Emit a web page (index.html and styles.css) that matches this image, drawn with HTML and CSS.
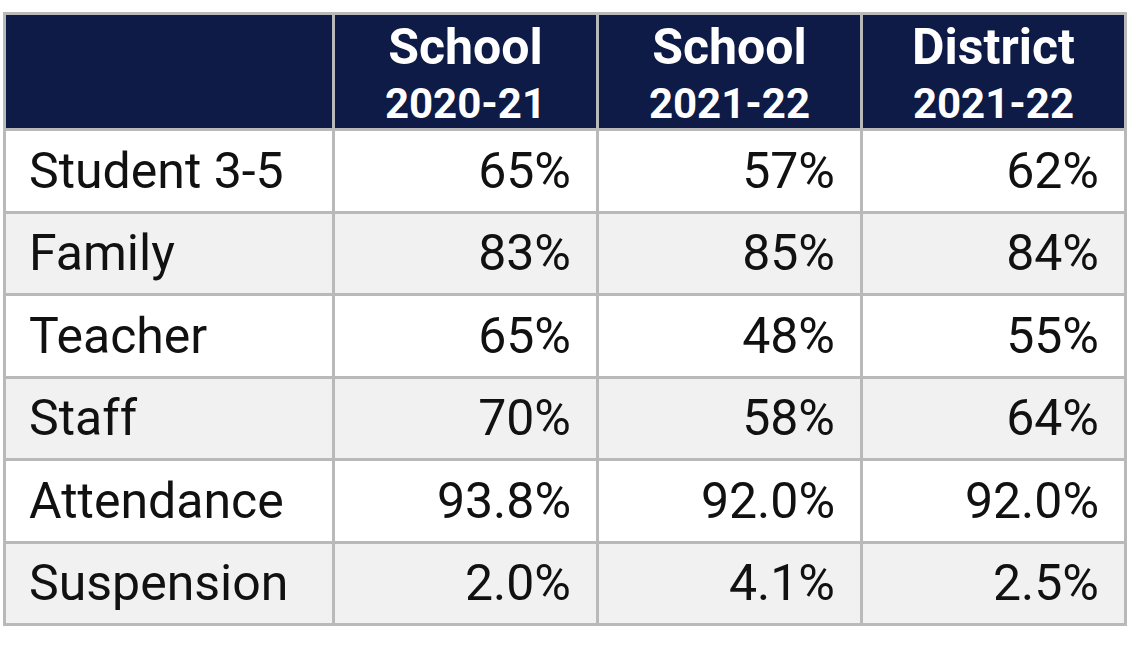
FILE: index.html
```html
<!DOCTYPE html>
<html>
<head>
<meta charset="utf-8">
<link rel="stylesheet" href="styles.css">
</head>
<body>
<table class="stats">
  <colgroup>
    <col class="c-label">
    <col class="c-val">
    <col class="c-val">
    <col class="c-val">
  </colgroup>
  <thead>
    <tr class="head">
      <th></th>
      <th><span class="h-top">School</span><span class="h-year">2020-21</span></th>
      <th><span class="h-top">School</span><span class="h-year">2021-22</span></th>
      <th><span class="h-top">District</span><span class="h-year">2021-22</span></th>
    </tr>
  </thead>
  <tbody>
    <tr><td class="label">Student 3-5</td><td>65%</td><td>57%</td><td>62%</td></tr>
    <tr class="alt"><td class="label">Family</td><td>83%</td><td>85%</td><td>84%</td></tr>
    <tr><td class="label">Teacher</td><td>65%</td><td>48%</td><td>55%</td></tr>
    <tr class="alt"><td class="label">Staff</td><td>70%</td><td>58%</td><td>64%</td></tr>
    <tr><td class="label">Attendance</td><td>93.8%</td><td>92.0%</td><td>92.0%</td></tr>
    <tr class="alt"><td class="label">Suspension</td><td>2.0%</td><td>4.1%</td><td>2.5%</td></tr>
  </tbody>
</table>
</body>
</html>
```
FILE: styles.css
```css
html, body {
  margin: 0;
  padding: 0;
  background: #ffffff;
}
body {
  padding: 12px 0 0 3px;
  font-family: Roboto, "Liberation Sans", sans-serif;
}
.stats {
  border-collapse: collapse;
  width: 1123px;
  table-layout: fixed;
  border: 3px solid #b9b9b9;
}
.c-label { width: 329px; }
.c-val { width: 264px; }
.stats th, .stats td {
  border: 3px solid #b9b9b9;
  padding: 0;
}
.head th {
  background: #0e1b47;
  color: #ffffff;
  height: 113px;
  text-align: center;
  vertical-align: top;
  font-weight: 700;
}
.h-top {
  display: block;
  font-size: 50px;
  line-height: 64px;
}
.h-year {
  display: block;
  font-size: 42px;
  line-height: 49px;
}
.stats td {
  height: 79.5px;
  font-size: 50px;
  color: #111111;
  text-align: right;
  padding-right: 25px;
  vertical-align: middle;
}
.stats td.label {
  text-align: left;
  padding-left: 23px;
  padding-right: 0;
}
.stats tr.alt td {
  background: #f1f1f1;
}
```
